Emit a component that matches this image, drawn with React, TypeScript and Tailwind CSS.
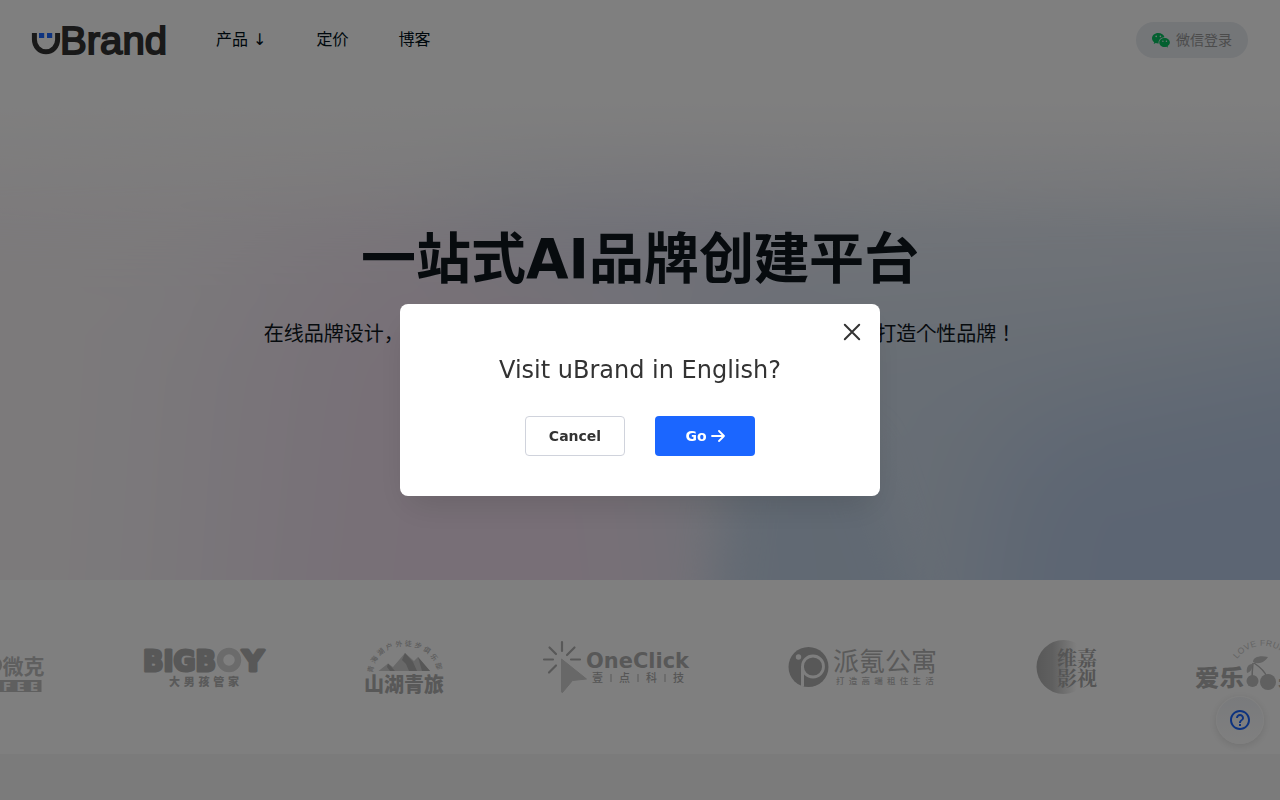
import type { ReactNode } from 'react';
import { MdHelpOutline } from 'react-icons/md';

const NAV_ITEMS = ['产品 ↓', '定价', '博客'];

const CJK = '"DejaVu Sans", "Noto Sans CJK JP", "Noto Sans CJK SC", sans-serif';
const SC = '"Noto Sans CJK SC", sans-serif';

function BrandLogo() {
  return (
    <svg className="overflow-visible" width="136" height="34" viewBox="0 0 136 34" role="img" aria-label="uBrand">
      <path d="M2.4 10v6.5a11.600 12.300 0 0 0 23.200 0V10" fill="none" stroke="#333" strokeWidth="5" />
      <rect x="7" y="10" width="5.2" height="5" fill="#1b66ff" />
      <rect x="15" y="10" width="5.2" height="5" fill="#1b66ff" />
      <text
        x="28"
        y="30.600"
        fontFamily='"Liberation Sans", sans-serif'
        fontSize="38"
        textLength="107"
        lengthAdjust="spacingAndGlyphs"
        fill="#333"
        stroke="#333"
        strokeWidth="1.800"
      >
        Brand
      </text>
    </svg>
  );
}

function WechatIcon() {
  return (
    <svg width="18" height="15" viewBox="0 0 18 15">
      <path
        d="M6.2 0C2.8 0 0 2.3 0 5.2c0 1.6.9 3 2.2 4L1.7 11l2-1c.8.2 1.6.4 2.5.4h.4C6.100 7 9 4.300 12.300 4.200h.2C12 1.800 9.400 0 6.200 0z"
        fill="#07c160"
      />
      <path
        d="M12.600 5c-3 0-5.300 2-5.300 4.500s2.300 4.500 5.300 4.500c.6 0 1.200-.1 1.700-.3l1.700.9-.4-1.500c1.300-.9 2.300-2.200 2.300-3.600C17.900 7 15.500 5 12.600 5z"
        fill="#07c160"
      />
      <g fill="#e8ecf3">
        <circle cx="4.200" cy="3.400" r=".8" />
        <circle cx="8.400" cy="3.400" r=".8" />
        <circle cx="10.900" cy="8.200" r=".7" />
        <circle cx="14.400" cy="8.200" r=".7" />
      </g>
    </svg>
  );
}

function Header() {
  return (
    <header className="flex h-20 items-center justify-between px-8">
      <div className="flex items-center">
        <BrandLogo />
        <nav className="ml-12 flex gap-[50px] text-[16px] leading-6 text-[#00111a]">
          {NAV_ITEMS.map((item) => (
            <a key={item} href="#" className="whitespace-nowrap">
              {item}
            </a>
          ))}
        </nav>
      </div>
      <button className="flex h-9 items-center gap-1.5 rounded-full bg-[#e8ecf1] px-4 text-sm text-[#999]">
        <WechatIcon />
        微信登录
      </button>
    </header>
  );
}

// Soft pastel backdrop: white at the top, pink to the left, blue to the lower right.
function HeroBackdrop() {
  return (
    <svg className="absolute inset-0" width="1280" height="580" viewBox="0 0 1280 580">
      <defs>
        <filter id="soft" x="-50%" y="-50%" width="200%" height="200%" colorInterpolationFilters="sRGB">
          <feGaussianBlur stdDeviation="60" />
        </filter>
        <filter id="edge" x="-50%" y="-50%" width="200%" height="200%" colorInterpolationFilters="sRGB">
          <feGaussianBlur stdDeviation="22" />
        </filter>
        <linearGradient id="top" x1="0" y1="0" x2="0" y2="1">
          <stop offset="0" stopColor="#fff" />
          <stop offset="0.4" stopColor="#fff" />
          <stop offset="1" stopColor="#fff" stopOpacity="0" />
        </linearGradient>
      </defs>
      <rect width="1280" height="580" fill="#fbf6f7" />
      <g filter="url(#soft)">
        <polygon points="-300,150 1600,120 1600,900 -300,900" fill="#f8f4f7" />
        <polygon points="180,330 300,200 460,200 700,420 700,900 140,900" fill="#f2e9f3" />
        <polygon points="440,140 1600,110 1600,900 580,900" fill="#e3e8f1" />
        <polygon points="500,180 760,140 820,330 580,340" fill="#e2e2f0" />
        <polygon points="330,290 500,250 660,400 720,900 260,900" fill="#f0dfee" />
        <polygon points="700,310 1600,240 1600,900 770,900" fill="#d0dcea" />
        <polygon points="1000,430 1600,300 1600,900 940,900" fill="#b9cbe6" />
      </g>
      <polygon points="740,420 860,440 930,640 710,640" fill="#b9cce3" opacity="0.6" filter="url(#edge)" />
      <rect width="1280" height="230" fill="url(#top)" />
    </svg>
  );
}

function Hero() {
  return (
    <section className="relative h-[580px] overflow-hidden">
      <HeroBackdrop />
      <div className="relative">
        <Header />
        <div className="flex flex-col items-center pt-[139px] text-[#0e161d]">
          <h1 className="text-[55px] leading-[80px] font-bold whitespace-nowrap">一站式AI品牌创建平台</h1>
          <p className="mt-5 text-xl leading-[30px] whitespace-nowrap">
            在线品牌设计，支持 AI 智能生成标志与全套品牌视觉物料，轻松几步打造个性品牌！
          </p>
        </div>
      </div>
    </section>
  );
}

function Partner({ width, label, children }: { width: number; label: string; children: ReactNode }) {
  return (
    <svg
      className="shrink-0 overflow-visible"
      width={width}
      height="54"
      viewBox={`0 0 ${width} 54`}
      role="img"
      aria-label={label}
    >
      {children}
    </svg>
  );
}

function Partners() {
  return (
    <section className="flex h-[174px] items-center gap-[99px] overflow-hidden bg-white">
      <div className="-ml-[78px] flex">
        <Partner width={122} label="微克 COFFEE">
          <circle cx="71" cy="25" r="7.500" fill="none" stroke="#bebebe" strokeWidth="3" />
          <text x="80.500" y="34" fontFamily={SC} fontWeight="700" fontSize="21" fill="#bebebe">
            微克
          </text>
          <rect x="40" y="40" width="79.500" height="12" fill="#bebebe" />
          <g fontFamily='"DejaVu Sans"' fontWeight="700" fontSize="12" fill="#f8f8f8">
            <text x="81" y="50.500">F</text>
            <text x="94.500" y="50.500">E</text>
            <text x="108" y="50.500">E</text>
          </g>
        </Partner>
      </div>

      <Partner width={122} label="BIGBOY 大男孩管家">
        <g
          fontFamily='"DejaVu Sans"'
          fontWeight="700"
          fontSize="29"
          fill="#b1b1b1"
          stroke="#b1b1b1"
          strokeWidth="3"
          strokeLinejoin="round"
        >
          <text x="0" y="30.500" textLength="73" lengthAdjust="spacingAndGlyphs">
            BIGB
          </text>
          <text x="99" y="30.500" textLength="22" lengthAdjust="spacingAndGlyphs">
            Y
          </text>
        </g>
        <circle cx="86" cy="20" r="9" fill="none" stroke="#d6d6d6" strokeWidth="6.500" />
        <text x="26" y="46" fontFamily={SC} fontWeight="900" fontSize="11" textLength="70" fill="#b4b4b4">
          大男孩管家
        </text>
      </Partner>

      <Partner width={80} label="山湖青旅">
        <path id="arc" d="M9 33a32 27 0 0 1 64 0" fill="none" />
        <text fontFamily={SC} fontWeight="500" fontSize="7" letterSpacing="2.200" fill="#b8b8b8">
          <textPath href="#arc">青海湖户外徒步俱乐部</textPath>
        </text>
        <path d="M14.500 31l9.500-7.500 5 3.500 12-14 9 8 4-4 12 14z" fill="#d0d0d0" />
        <path d="M24 23.500l7 7.500h-5l-3-4zM41 13l8 9 4 9H45l-3-7-4-4zM54 17l12 14h-8l-2-7z" fill="#aeaeae" />
        <text x="0" y="52" fontFamily={SC} fontWeight="900" fontSize="20" textLength="80" fill="#b1b1b1">
          山湖青旅
        </text>
      </Partner>

      <Partner width={146} label="OneClick 壹点科技">
        <g stroke="#b1b1b1" strokeWidth="2.200" strokeLinecap="round">
          <path d="M19 2v9M6.500 7.500l6.500 6.500M31.500 7.500l-7.500 7.500M1 19.500h9M28 19.500h9M6 32.500l7-7" />
        </g>
        <path d="M18.500 19l25 20-14 1.500-10 12a1 1 0 0 1-1-.6z" fill="#d0d0d0" stroke="#d0d0d0" strokeLinejoin="round" />
        <text x="43" y="28" fontFamily='"DejaVu Sans"' fontWeight="700" fontSize="22" textLength="103" lengthAdjust="spacingAndGlyphs" fill="#b1b1b1">
          OneClick
        </text>
        <g fontFamily={SC} fontWeight="500" fontSize="11" fill="#adadad">
          <text x="49" y="42">壹</text>
          <text x="76" y="42">点</text>
          <text x="103" y="42">科</text>
          <text x="130" y="42">技</text>
        </g>
        <path d="M68 34v8M95 34v8M122 34v8" stroke="#b1b1b1" strokeWidth="1" />
      </Partner>

      <Partner width={150} label="派氪公寓">
        <circle cx="20.500" cy="27" r="20" fill="#b1b1b1" />
        <circle cx="25" cy="26.500" r="10.500" fill="none" stroke="#fdfdfd" strokeWidth="2.800" />
        <path d="M14.500 26v20.500" stroke="#fdfdfd" strokeWidth="3" />
        <circle cx="10.500" cy="17" r="2.700" fill="#fdfdfd" />
        <text x="45" y="31" fontFamily={SC} fontWeight="400" fontSize="26" textLength="104" fill="#b4b4b4">
          派氪公寓
        </text>
        <text x="48" y="44" fontFamily={SC} fontWeight="500" fontSize="8.500" letterSpacing="4.250" fill="#bababa">
          打造高端租住生活
        </text>
      </Partner>

      <Partner width={60} label="维嘉影视">
        <defs>
          <linearGradient id="moon">
            <stop offset="0" stopColor="#b1b1b1" />
            <stop offset="0.300" stopColor="#c0c0c0" />
            <stop offset="0.750" stopColor="#fff" />
          </linearGradient>
        </defs>
        <circle cx="26.500" cy="27" r="27" fill="url(#moon)" />
        <g fontFamily='"Noto Serif CJK SC", "Noto Sans CJK SC", serif' fontWeight="700" fontSize="20" fill="#aaa">
          <text x="20" y="26">维嘉</text>
          <text x="20" y="46">影视</text>
        </g>
      </Partner>

      <Partner width={122} label="爱乐果">
        <path id="fruit" d="M41 19a32 32 0 0 1 56 8" fill="none" />
        <text fontFamily='"Liberation Sans"' fontSize="8.500" letterSpacing=".400" fill="#c8c8c8">
          <textPath href="#fruit">LOVE FRUIT</textPath>
        </text>
        <g fontFamily={SC} fontWeight="900" fontSize="23" fill="#b1b1b1">
          <text x="-1" y="46" textLength="49" lengthAdjust="spacingAndGlyphs">
            爱乐
          </text>
          <text x="82" y="46">果</text>
        </g>
        <path d="M57 23c-1 9-1 13-1 19M58 23c6 4 11 9 13 14" fill="none" stroke="#bababa" strokeWidth="1.500" />
        <path d="M57 22c0-5 7-7 15-5-3 5-9 8-15 5zM56 24c-4 0-6 4-5 9 4-1 6-5 5-9z" fill="#c4c4c4" />
        <circle cx="56.500" cy="41" r="6" fill="#c0c0c0" />
        <circle cx="72" cy="42" r="8" fill="#c0c0c0" />
      </Partner>
    </section>
  );
}

function HelpButton() {
  return (
    <button
      aria-label="帮助"
      className="fixed right-4 bottom-14 flex size-12 items-center justify-center rounded-full border border-white bg-linear-to-b from-[#f3f5f9] to-white text-[#1b66ff] shadow-[0_2px_8px_rgba(0,0,0,0.12)]"
    >
      <MdHelpOutline size={24} />
    </button>
  );
}

function LanguageDialog() {
  return (
    <div className="fixed inset-0 flex items-center justify-center bg-black/50">
      <div
        role="dialog"
        className="relative flex h-48 w-[480px] flex-col items-center rounded-lg bg-white pt-12 text-[#333] shadow-[0_16px_32px_-8px_rgba(0,0,0,0.12)]"
      >
        <button aria-label="Close" className="absolute top-4 right-4">
          <svg width="24" height="24" viewBox="0 0 24 24" fill="none" stroke="#333" strokeWidth="2" strokeLinecap="round">
            <path d="M4.800 4.800l14.400 14.400M19.200 4.800L4.800 19.200" />
          </svg>
        </button>
        <h2 className="text-2xl leading-9">Visit uBrand in English?</h2>
        <div className="mt-7 flex gap-[30px] text-sm font-bold">
          <button className="h-10 w-[100px] rounded border border-[#d0d3dc]">Cancel</button>
          <button className="flex h-10 w-[100px] items-center justify-center gap-1 rounded bg-[#1b66ff] text-white">
            Go
            <svg width="14" height="14" viewBox="0 0 14 14" fill="none" stroke="#fff" strokeWidth="1.800" strokeLinecap="round" strokeLinejoin="round">
              <path d="M1 7h12M8 2l5 5-5 5" />
            </svg>
          </button>
        </div>
      </div>
    </div>
  );
}

export default function App() {
  return (
    <div className="h-screen overflow-hidden bg-[#f6f6f6]" style={{ fontFamily: CJK }}>
      <Hero />
      <Partners />
      <HelpButton />
      <LanguageDialog />
    </div>
  );
}
